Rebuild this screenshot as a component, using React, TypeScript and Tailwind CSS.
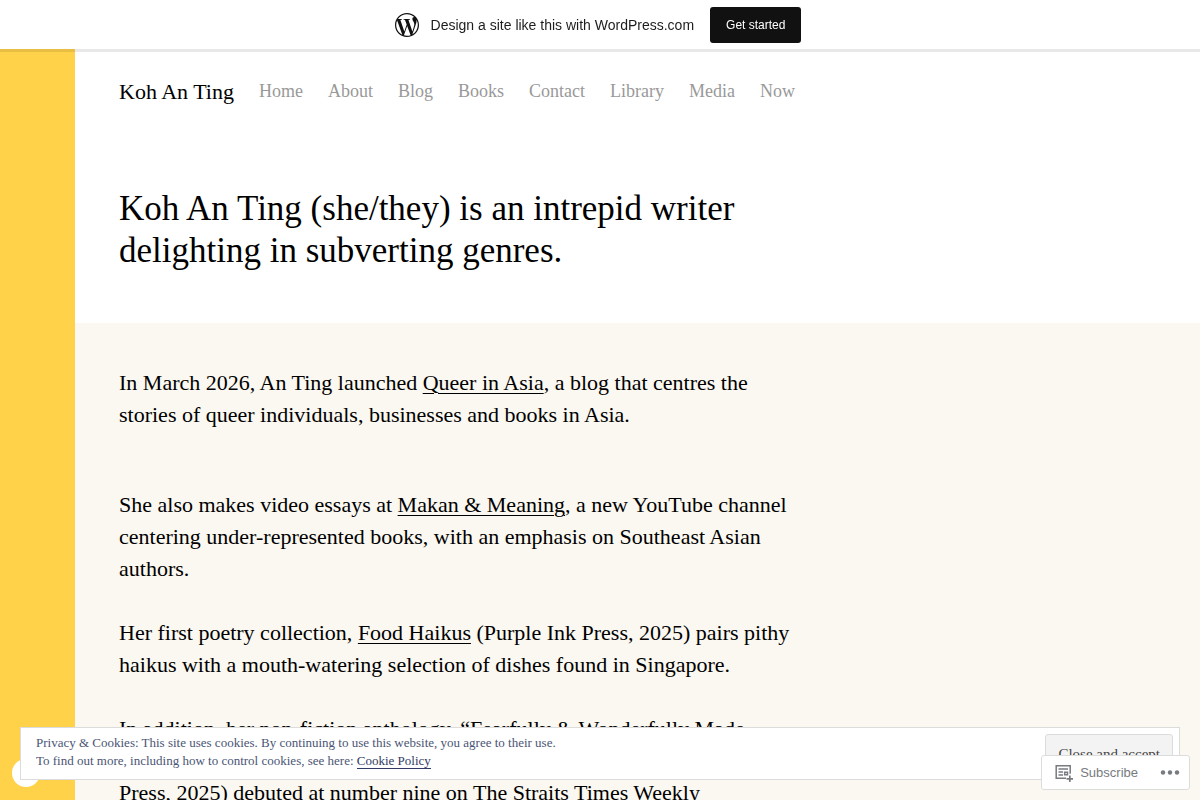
const links = [
  "Home",
  "About",
  "Blog",
  "Books",
  "Contact",
  "Library",
  "Media",
  "Now",
];

const TopBar = () => {
  return (
    <div className="fixed inset-x-0 top-0 z-20 flex h-[49px] items-center justify-center bg-white pr-1 font-['Liberation_Sans',sans-serif] shadow-[0_0_0_3px_rgba(0,0,0,0.09)]">
      <svg
        viewBox="2 2 20 20"
        className="mr-3 size-6 text-[#111]"
        fill="currentColor"
      >
        <path d="M12 2C6.486 2 2 6.486 2 12s4.486 10 10 10 10-4.486 10-10S17.514 2 12 2zM3.009 12c0-1.304.28-2.541.78-3.659l4.289 11.749C5.079 18.633 3.009 15.558 3.009 12zm8.991 8.992c-.883 0-1.734-.13-2.54-.366l2.697-7.838 2.764 7.573c.018.044.04.085.064.124-.934.329-1.938.507-2.985.507zm1.239-13.206c.541-.028 1.029-.085 1.029-.085.484-.057.427-.769-.057-.74 0 0-1.456.114-2.396.114-.883 0-2.367-.114-2.367-.114-.484-.028-.541.712-.057.74 0 0 .458.057.942.085l1.400 3.836-1.967 5.898-3.272-9.734c.542-.028 1.029-.085 1.029-.085.484-.057.427-.769-.057-.740 0 0-1.456.114-2.396.114-.169 0-.368-.004-.579-.011C6.098 4.624 8.862 3.008 12 3.008c2.340 0 4.470.895 6.069 2.359-.039-.002-.077-.007-.116-.007-.883 0-1.509.769-1.509 1.595 0 .740.427 1.367.883 2.107.342.598.740 1.366.740 2.477 0 .769-.295 1.661-.683 2.904l-.896 2.992-3.249-9.649zm3.281 11.985 2.745-7.937c.513-1.282.684-2.308.684-3.220 0-.331-.022-.638-.061-.924.702 1.280 1.101 2.749 1.101 4.310 0 3.314-1.796 6.207-4.469 7.771z" />
      </svg>
      <span className="mr-4 text-sm text-[#1d1d1d]">
        Design a site like this with WordPress.com
      </span>
      <a
        href="#start"
        className="flex h-9 items-center rounded-[3px] bg-[#111] px-4 text-xs text-white"
      >
        Get started
      </a>
    </div>
  );
};

const CookieNotice = () => {
  return (
    <div className="fixed inset-x-5 bottom-5 z-10 flex h-[53px] items-start justify-between overflow-hidden border border-[#dcdcdc] bg-white pt-1.5 pr-1.5 pl-[15px]">
      <p className="text-[13px] leading-[18px] text-[#4b5575]">
        Privacy &amp; Cookies: This site uses cookies. By continuing to use
        this website, you agree to their use.
        <br />
        To find out more, including how to control cookies, see here:{" "}
        <a href="#cookies" className="border-b border-[#2f3b66] text-[#2f3b66]">
          Cookie Policy
        </a>
      </p>
      <button
        type="button"
        className="h-[41px] rounded-[3px] border border-[#dcdcdc] bg-[#f3f3f3] px-3 text-[15px] text-[#444]"
      >
        Close and accept
      </button>
    </div>
  );
};

const ActionBar = () => {
  return (
    <div className="fixed right-[10px] bottom-[10px] z-20 flex h-[35px] items-center rounded-[3px] border border-[#dcdcdc] bg-white pr-[9px] pl-3 font-['Liberation_Sans',sans-serif] text-[#777b80]">
      <button type="button" className="flex items-center text-[13px]">
        <svg
          viewBox="0 0 20 20"
          className="mr-1.5 size-5"
          fill="none"
          stroke="currentColor"
          strokeWidth="1.5"
        >
          <path d="M12 15.2H2.2V2.7h14v8" />
          <path d="M4.5 6h9.5M4.5 9h4.5M4.5 12h4.5" />
          <path d="M10.7 9.2h2.8v2.6h-2.8z" />
          <path d="M15.8 12.5v6.5M12.5 15.8h6.5" strokeWidth="1.7" />
        </svg>
        Subscribe
      </button>
      <button type="button" aria-label="More" className="ml-[22px]">
        <svg viewBox="0 0 20 20" className="size-5" fill="currentColor">
          <circle cx="3" cy="9.5" r="2.2" />
          <circle cx="10" cy="9.5" r="2.2" />
          <circle cx="17" cy="9.5" r="2.2" />
        </svg>
      </button>
    </div>
  );
};

const TextLink = ({ children }: { children: string }) => (
  <a href="#read" className="underline decoration-1 underline-offset-3">
    {children}
  </a>
);

export default function App() {
  return (
    <div className="min-h-screen bg-[#ffd24a] pl-[75px] font-['Liberation_Serif',serif] text-black">
      <TopBar />

      <header className="bg-white px-11 pt-[75px] pb-[51px]">
        <nav className="flex h-8 items-center gap-[25px]">
          <a href="#top" className="text-[22px] whitespace-nowrap">
            Koh An Ting
          </a>
          {links.map((link) => (
            <a key={link} href={`#${link}`} className="text-lg text-[#999]">
              {link}
            </a>
          ))}
        </nav>
        <h1 className="mt-[81px] max-w-[700px] text-[35px] leading-[42px]">
          Koh An Ting (she/they) is an intrepid writer
          <br />
          delighting in subverting genres.
        </h1>
      </header>

      <main className="min-h-[480px] bg-[#fbf8f1] px-11 pt-11 text-[22px] leading-8 whitespace-nowrap">
        <p className="mb-[58px]">
          In March 2026, An Ting launched <TextLink>Queer in Asia</TextLink>, a
          blog that centres the
          <br />
          stories of queer individuals, businesses and books in Asia.
        </p>
        <p className="mb-8">
          She also makes video essays at <TextLink>Makan & Meaning</TextLink>,
          a new YouTube channel
          <br />
          centering under-represented books, with an emphasis on Southeast Asian
          <br />
          authors.
        </p>
        <p className="mb-8">
          Her first poetry collection, <TextLink>Food Haikus</TextLink> (Purple
          Ink Press, 2025) pairs pithy
          <br />
          haikus with a mouth-watering selection of dishes found in Singapore.
        </p>
        <p>
          In addition, her non-fiction anthology, “Fearfully & Wonderfully Made
          <br />
          <br />
          Press, 2025) debuted at number nine on The Straits Times Weekly
        </p>
      </main>

      <div className="fixed bottom-[13px] left-3 size-7 rounded-full bg-white" />
      <CookieNotice />
      <ActionBar />
    </div>
  );
}
